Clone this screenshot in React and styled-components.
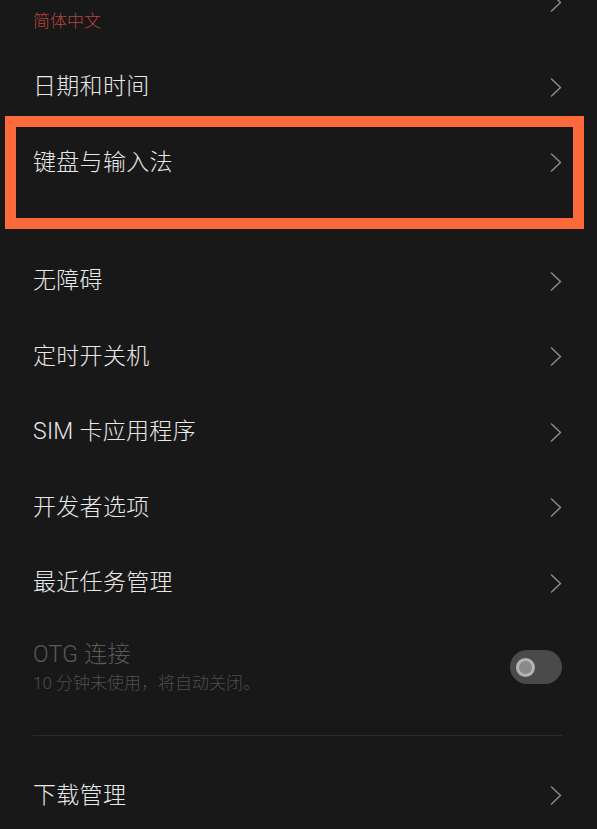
import React from "react";
import styled, { createGlobalStyle } from "styled-components";

const Global = createGlobalStyle`
  html, body { margin: 0; padding: 0; background: #181818; }
  body { font-family: Roboto, "Noto Sans CJK SC", sans-serif; }
`;

const Screen = styled.div`
  width: 597px;
  height: 829px;
  overflow: hidden;
  background: #181818;
`;

const List = styled.div`
  display: flex;
  flex-direction: column;
  margin-top: -44px;
`;

const Row = styled.div`
  position: relative;
  height: ${(p) => p.$h || 75.5}px;
  display: flex;
  align-items: center;
  justify-content: space-between;
  padding: 0 35px 0 33px;
  box-sizing: border-box;
  flex-shrink: 0;
`;

const TextBlock = styled.div`
  display: flex;
  flex-direction: column;
  gap: ${(p) => p.$gap || 2}px;
`;

const Title = styled.div`
  font-size: 23px;
  font-weight: 300;
  line-height: 30px;
  color: ${(p) => (p.$disabled ? "#595959" : "#e8e8e8")};
  letter-spacing: 0.3px;
`;

const Sub = styled.div`
  font-size: 17px;
  font-weight: 300;
  line-height: 24px;
  color: ${(p) => p.$color || "#4e4e4e"};
`;

const Spacer = styled.div`
  height: ${(p) => p.$h}px;
  flex-shrink: 0;
`;

const Divider = styled.div`
  height: 1px;
  margin: 0 35px 0 33px;
  background: #2b2b2b;
  flex-shrink: 0;
`;

const Highlight = styled.div`
  position: absolute;
  left: 5px;
  top: -9.5px;
  width: 579px;
  height: 113px;
  box-sizing: border-box;
  border: 11px solid #fc6a3c;
  pointer-events: none;
`;

const Toggle = styled.div`
  width: 52px;
  height: 34px;
  border-radius: 17px;
  background: #4a4a4a;
  display: flex;
  align-items: center;
  padding-left: 6px;
  box-sizing: border-box;
`;

const Knob = styled.div`
  width: 19px;
  height: 19px;
  border-radius: 50%;
  background: #8a8a8a;
  border: 3px solid #b4b4b4;
  box-sizing: border-box;
`;

const Chevron = () => (
  <svg width="12" height="19" viewBox="0 0 12 19" fill="none">
    <polyline
      points="1.5,1 10.5,9.5 1.5,18"
      stroke="#888888"
      strokeWidth="1.6"
      strokeLinecap="round"
      strokeLinejoin="round"
    />
  </svg>
);

const items1 = ["日期和时间"];
const items2 = ["无障碍", "定时开关机", "SIM 卡应用程序", "开发者选项", "最近任务管理"];

export default function App() {
  return (
    <Screen>
      <Global />
      <List>
        <Row $h={93.5}>
          <TextBlock $gap={6}>
            <Title>语言</Title>
            <Sub $color="#b4443c">简体中文</Sub>
          </TextBlock>
          <Chevron />
        </Row>
        {items1.map((t) => (
          <Row key={t}>
            <Title>{t}</Title>
            <Chevron />
          </Row>
        ))}
        <Row>
          <Title>键盘与输入法</Title>
          <Chevron />
          <Highlight />
        </Row>
        <Spacer $h={43} />
        {items2.map((t) => (
          <Row key={t}>
            <Title>{t}</Title>
            <Chevron />
          </Row>
        ))}
        <Row $h={92}>
          <TextBlock $gap={1}>
            <Title $disabled>OTG 连接</Title>
            <Sub>10 分钟未使用，将自动关闭。</Sub>
          </TextBlock>
          <Toggle>
            <Knob />
          </Toggle>
        </Row>
        <Spacer $h={22} />
        <Divider />
        <Spacer $h={22} />
        <Row>
          <Title>下载管理</Title>
          <Chevron />
        </Row>
      </List>
    </Screen>
  );
}
